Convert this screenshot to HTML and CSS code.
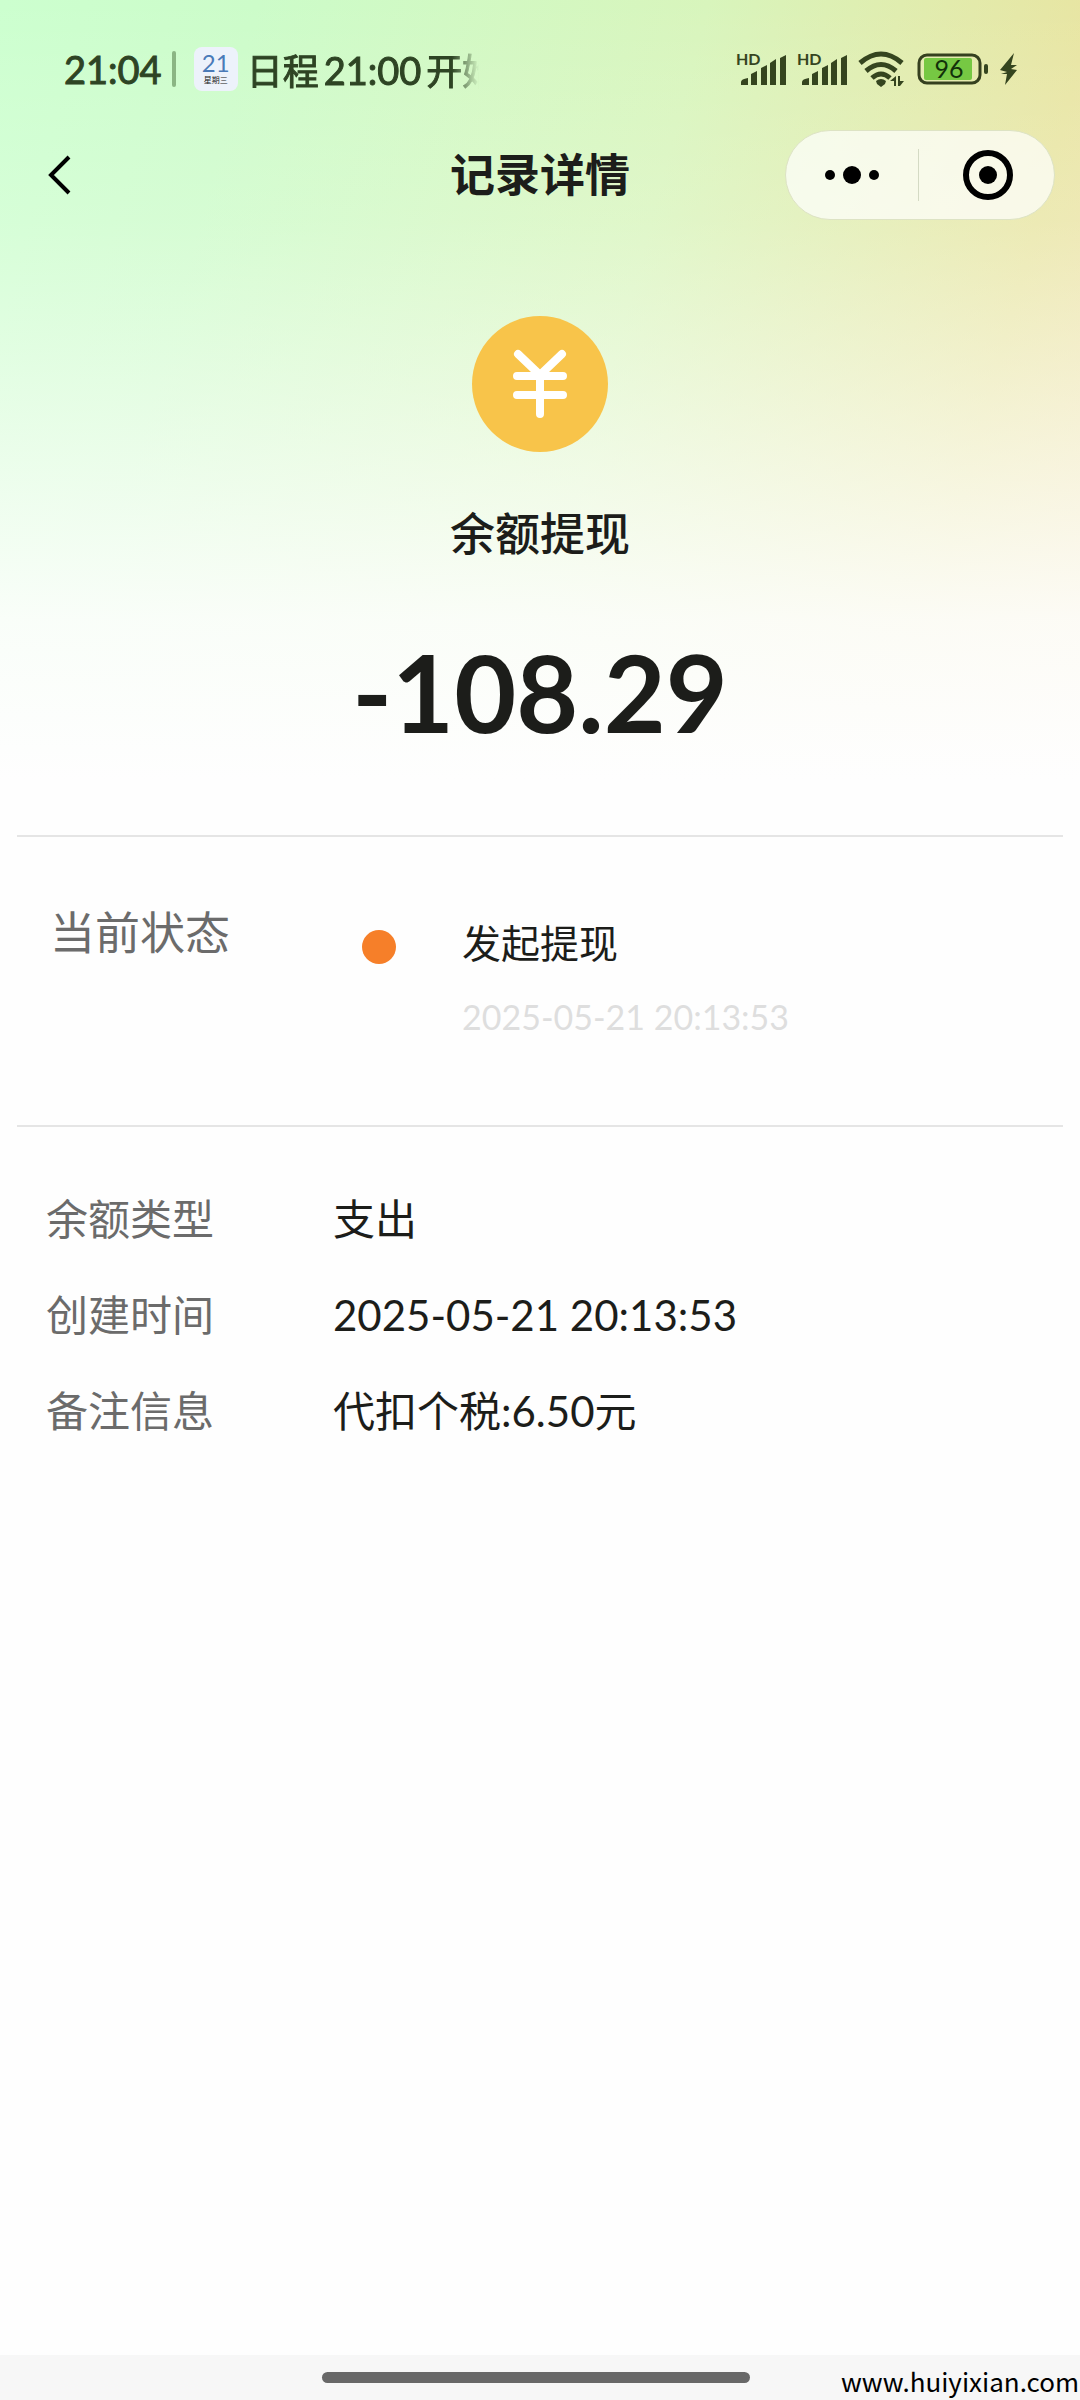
FILE: index.html
```
<!DOCTYPE html>
<html lang="zh-CN">
<head>
    <meta charset="UTF-8">
    <meta name="viewport" content="width=device-width, initial-scale=1.0">
    <title>记录详情</title>
    <link rel="stylesheet" href="styles.css">
</head>
<body>
    <div class="status-bar">
        <span class="clock">21:04</span>
        <span class="separator"></span>
        <span class="calendar">
            <span class="calendar-day">21</span>
            <span class="calendar-week">星期三</span>
        </span>
        <span class="notice">日程<span class="notice-time">21:00</span>开始</span>

        <div class="status-icons">
            <svg class="signal" width="50" height="42" viewBox="0 -4 50 42">
                <text x="0" y="13">HD</text>
                <path d="M5 33v-3q0-3 7-4v7zM15 33V22l6-3v14zM25 33V16l6-3v20zM34 33V11l6-4v26zM44 33V6l6-3v30z"/>
            </svg>
            <svg class="signal" width="50" height="42" viewBox="0 -4 50 42">
                <text x="0" y="13">HD</text>
                <path d="M5 33v-3q0-3 7-4v7zM15 33V22l6-3v14zM25 33V16l6-3v20zM34 33V11l6-4v26zM44 33V6l6-3v30z"/>
            </svg>
            <svg class="wifi" width="48" height="36" viewBox="0 0 48 36">
                <g fill="none" stroke="currentColor" stroke-width="5">
                    <path d="M2 12Q23-6 44 12"/>
                    <path d="M8 20Q23 7 38 20"/>
                    <path d="M14 27Q23 19 32 27"/>
                </g>
                <path d="M18 30q5-4 10 0l-1 3-4 3-4-3zM38 25v10h-2v-5h-4zM40 35V25h2v5h4l-4 5z"/>
            </svg>
            <svg class="battery" width="72" height="32" viewBox="0 0 72 32">
                <rect x="2" y="2" width="61" height="28" rx="8" fill="none" stroke="#35401f" stroke-width="3"/>
                <rect x="7" y="5" width="48" height="22" rx="2" fill="#76c843"/>
                <rect x="67" y="11" width="4" height="10" rx="2"/>
                <text x="32" y="25" text-anchor="middle">96</text>
            </svg>
            <svg width="18" height="32" viewBox="0 0 18 32">
                <path d="M14 0L0 17l7 2-6 2h6L5 32l12-15-6-1 6-4h-6z"/>
            </svg>
        </div>
    </div>

    <header class="nav">
        <button class="back" aria-label="返回">
            <svg width="24" height="48" viewBox="0 0 24 48">
                <path d="M22 6L4 24l18 18" fill="none" stroke="#000" stroke-width="4"/>
            </svg>
        </button>
        <h1>记录详情</h1>
        <div class="capsule">
            <button aria-label="更多">
                <svg width="54" height="18" viewBox="0 0 54 18">
                    <circle cx="5" cy="9" r="5"/>
                    <circle cx="27" cy="9" r="9"/>
                    <circle cx="49" cy="9" r="5"/>
                </svg>
            </button>
            <button aria-label="关闭">
                <svg width="50" height="50" viewBox="0 0 50 50">
                    <circle cx="25" cy="25" r="22" fill="none" stroke="#000" stroke-width="6"/>
                    <circle cx="25" cy="25" r="9"/>
                </svg>
            </button>
        </div>
    </header>

    <main>
        <section class="summary">
            <svg class="coin" width="136" height="136" viewBox="0 0 136 136">
                <circle cx="68" cy="68" r="68" fill="#f8c44a"/>
                <path d="M46 38l22 21 22-21M45 60h46M45 79h46M68 59v39" fill="none" stroke="#fff" stroke-width="8" stroke-linecap="round" stroke-linejoin="round"/>
            </svg>
            <h2>余额提现</h2>
            <p class="amount">-108.29</p>
        </section>

        <section class="progress">
            <span class="progress-label">当前状态</span>
            <span class="dot"></span>
            <div class="step">
                <p>发起提现</p>
                <time>2025-05-21 20:13:53</time>
            </div>
        </section>

        <dl class="details">
            <dt>余额类型</dt>
            <dd>支出</dd>
            <dt>创建时间</dt>
            <dd>2025-05-21 20:13:53</dd>
            <dt>备注信息</dt>
            <dd>代扣个税:6.50元</dd>
        </dl>
    </main>

    <footer>
        <span class="home-bar"></span>
        <span class="watermark">www.huiyixian.com</span>
    </footer>
</body>
</html>
```
FILE: styles.css
```
* {
    box-sizing: border-box;
}

body {
    margin: 0;
    min-height: 100vh;
    display: flex;
    flex-direction: column;
    font-family: Lato, "Noto Sans CJK SC", sans-serif;
    color: #1c1d1a;
    background-color: #fefefe;
    /* white fade over the green to yellow tint */
    background-image:
        linear-gradient(to bottom, rgba(254, 254, 254, 0) 0, rgba(254, 254, 254, 0.2) 220px, rgba(254, 254, 254, 0.55) 420px, rgba(254, 254, 254, 0.9) 620px, #fefefe 780px),
        linear-gradient(105deg, #ccffcf 0%, #ccfcc9 20%, #d8f5bc 55%, #e8e5a2 85%, #f0e0a8 100%);
    background-size: 100% 780px;
    background-repeat: no-repeat;
}

h1, h2, p, dl, dd {
    margin: 0;
}

button {
    padding: 0;
    border: 0;
    background: none;
}

svg {
    display: block;
}

/* Status bar */
.status-bar {
    height: 120px;
    padding: 18px 62px 0 64px;
    display: flex;
    align-items: center;
    color: #2e4424;
}

.clock {
    font-size: 38px;
    -webkit-text-stroke: 1px;
}

.separator {
    width: 4px;
    height: 36px;
    margin: 0 18px 0 10px;
    border-radius: 2px;
    background-color: #8bb584;
}

.calendar {
    width: 44px;
    height: 44px;
    display: flex;
    flex-direction: column;
    align-items: center;
    justify-content: center;
    border-radius: 8px;
    background-color: #edf2fb;
}

.calendar-day {
    font-size: 24px;
    line-height: 22px;
    color: #4a7ab8;
}

.calendar-week {
    font-size: 8px;
    line-height: 12px;
    color: #222;
}

.notice {
    width: 232px;
    margin-left: 9px;
    font-size: 36px;
    white-space: nowrap;
    overflow: hidden;
    -webkit-text-stroke: 1px;
    mask-image: linear-gradient(to right, #000 205px, transparent 232px);
}

.notice-time {
    margin: 0 5px;
    font-size: 38px;
}

.status-icons {
    display: flex;
    align-items: center;
    gap: 11px;
    margin-left: auto;
    color: #35451f;
}

.status-icons svg {
    fill: currentColor;
}

.signal text {
    font-size: 16px;
    font-weight: bold;
}

.battery text {
    font-size: 25px;
    fill: #12310a;
}

/* Title bar */
.nav {
    height: 110px;
    padding: 0 25px;
    display: grid;
    grid-template-columns: 1fr auto 1fr;
    align-items: center;
}

.back {
    justify-self: start;
    margin-left: 22px;
}

.nav h1,
.summary h2 {
    font-size: 45px;
    line-height: 60px;
}

.capsule {
    justify-self: end;
    width: 270px;
    height: 90px;
    display: flex;
    align-items: center;
    border: 1px solid #dde3c4;
    border-radius: 45px;
    background-color: rgba(255, 255, 255, 0.7);
}

.capsule button {
    flex: 1;
    height: 52px;
    display: flex;
    align-items: center;
    justify-content: center;
}

.capsule button + button {
    padding-left: 4px;
    border-left: 1px solid #d4dac4;
}

/* Balance summary */
main {
    flex: 1;
    padding: 0 17px;
}

.summary {
    display: flex;
    flex-direction: column;
    align-items: center;
    padding: 86px 0 83px;
    border-bottom: 2px solid #e5e5e5;
}

.summary h2 {
    margin-top: 52px;
    font-weight: 500;
}

.amount {
    margin-top: 68px;
    font-size: 107px;
    line-height: 120px;
    font-weight: bold;
}

/* Current status */
.progress {
    display: grid;
    grid-template-columns: 312px 100px 1fr;
    align-items: start;
    padding: 66px 0 82px 33px;
    border-bottom: 2px solid #e5e5e5;
}

.progress-label {
    font-size: 45px;
    line-height: 60px;
    color: #6b6b6b;
}

.dot {
    width: 34px;
    height: 34px;
    margin-top: 27px;
    border-radius: 50%;
    background-color: #f67f29;
}

.step {
    padding-top: 10px;
}

.step p {
    font-size: 39px;
    line-height: 60px;
}

.step time {
    display: block;
    margin-top: 18px;
    font-size: 34px;
    line-height: 52px;
    color: #dedede;
}

/* Record details */
.details {
    display: grid;
    grid-template-columns: 287px 1fr;
    row-gap: 36px;
    padding: 62px 29px;
    font-size: 42px;
    line-height: 60px;
}

.details dt {
    color: #6b6b6b;
}

/* Home indicator */
footer {
    position: relative;
    height: 45px;
    display: flex;
    justify-content: center;
    align-items: center;
    padding-right: 8px;
    background-color: #f7f7f7;
}

.home-bar {
    width: 428px;
    height: 11px;
    border-radius: 6px;
    background-color: #686868;
}

.watermark {
    position: absolute;
    right: 1px;
    bottom: 1px;
    font-family: "Noto Sans CJK SC", sans-serif;
    font-size: 26px;
    line-height: 36px;
    color: #000;
}
```
